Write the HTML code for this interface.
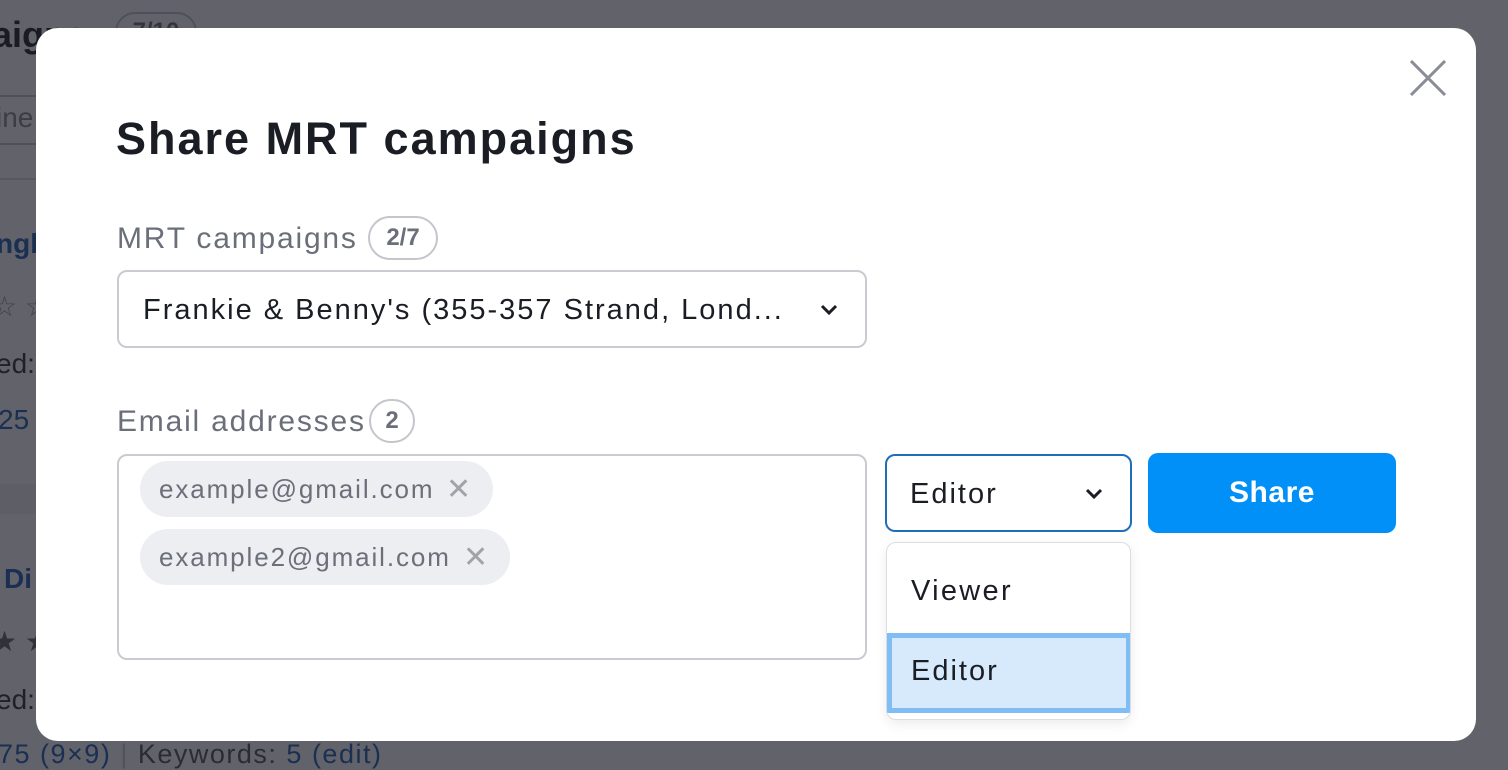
<!DOCTYPE html>
<html><head><meta charset="utf-8"><style>
*{box-sizing:border-box;margin:0;padding:0}
body{width:1508px;height:770px;overflow:hidden;position:relative;font-family:"Liberation Sans",sans-serif;background:#fff}
.bg{position:absolute;inset:0;background:#fff}
.bt{position:absolute;font-size:28px;white-space:nowrap}
.ov{position:absolute;inset:0;background:rgba(23,25,35,.68)}
.modal{position:absolute;left:36px;top:28px;width:1440px;height:713px;background:#fff;border-radius:22px}
.a{position:absolute;white-space:nowrap}
.lbl{font-size:30px;color:#6b6f7a;letter-spacing:1.8px}
.badge{position:absolute;border:2px solid #c4c6cc;border-radius:22px;height:44px;font-size:24px;color:#6b6f7a;display:flex;align-items:center;justify-content:center;font-weight:bold}
.chip{position:absolute;height:56px;border-radius:28px;background:#eceef1;font-size:26px;color:#6b6f7a;display:flex;align-items:center;padding-left:19px;letter-spacing:1.9px}
.x{position:absolute;top:11px;font-size:30px;color:#a0a3aa;letter-spacing:0}
</style></head><body>
<div class="bg">
<div class="bt" style="left:-8px;top:14px;font-weight:bold;font-size:36px;color:#222">aigns</div>
<div class="badge" style="left:115px;top:12px;width:82px;height:40px">7/10</div>
<div style="position:absolute;left:-10px;top:95px;width:60px;height:50px;border:2px solid #c4c6cc;border-radius:8px"></div>
<div class="bt" style="left:-4px;top:102px;color:#888">ine</div>
<div style="position:absolute;left:0;top:178px;width:40px;height:2px;background:#ddd"></div>
<div class="bt" style="left:-4px;top:228px;font-weight:bold;color:#1f5fb0">ngl</div>
<div class="bt" style="left:-8px;top:290px;color:#999">☆ ☆</div>
<div class="bt" style="left:-4px;top:348px;color:#333">ed:</div>
<div class="bt" style="left:-2px;top:404px;color:#1f5fb0">25</div>
<div style="position:absolute;left:0;top:484px;width:40px;height:30px;background:#eef0f3"></div>
<div class="bt" style="left:4px;top:563px;font-weight:bold;color:#1f5fb0">Di</div>
<div class="bt" style="left:-8px;top:625px;color:#666">★ ★</div>
<div class="bt" style="left:-4px;top:684px;color:#333">ed:</div>
<div class="bt" style="left:-2px;top:739px;font-size:27px;color:#1f5fb0;letter-spacing:1.5px">75 (9×9) <span style="color:#ccc">|</span> <span style="color:#555">Keywords:</span> 5 (edit)</div>
</div>
<div class="ov"></div>
<div class="modal">
<svg class="a" style="left:1374px;top:32px" width="36" height="36" viewBox="0 0 36 36"><path d="M1 1L35 35M35 1L1 35" stroke="#8a8d96" stroke-width="3" fill="none"/></svg>
<div class="a" style="left:80px;top:85px;font-size:45px;font-weight:bold;color:#1b1d24;letter-spacing:2px">Share MRT campaigns</div>
<div class="a lbl" style="left:81px;top:194px">MRT campaigns</div>
<div class="badge" style="left:332px;top:188px;width:70px">2/7</div>
<div class="a" style="left:81px;top:242px;width:750px;height:78px;border:2px solid #c9cbd0;border-radius:10px"></div>
<div class="a" style="left:107px;top:266px;font-size:29px;color:#1b1d24;letter-spacing:2px">Frankie &amp; Benny's (355-357 Strand, Lond...</div>
<svg class="a" style="left:784px;top:276px" width="18" height="12" viewBox="0 0 18 12"><path d="M2 2l7 7 7-7" stroke="#1b1d24" stroke-width="3" fill="none"/></svg>
<div class="a lbl" style="left:81px;top:377px">Email addresses</div>
<div class="badge" style="left:333px;top:371px;width:46px">2</div>
<div class="a" style="left:81px;top:426px;width:750px;height:206px;border:2px solid #c9cbd0;border-radius:10px"></div>
<div class="chip" style="left:104px;top:433px;width:353px">example@gmail.com<span class="x" style="left:306px">✕</span></div>
<div class="chip" style="left:104px;top:501px;width:370px">example2@gmail.com<span class="x" style="left:323px">✕</span></div>
<div class="a" style="left:849px;top:426px;width:247px;height:78px;border:2px solid #1f6fb8;border-radius:10px"></div>
<div class="a" style="left:874px;top:450px;font-size:29px;color:#1b1d24;letter-spacing:2px">Editor</div>
<svg class="a" style="left:1049px;top:460px" width="18" height="12" viewBox="0 0 18 12"><path d="M2 2l7 7 7-7" stroke="#1b1d24" stroke-width="3" fill="none"/></svg>
<div class="a" style="left:1112px;top:425px;width:248px;height:80px;background:#0090f7;border-radius:10px;color:#fff;font-size:30px;font-weight:bold;display:flex;align-items:center;justify-content:center;letter-spacing:0.5px">Share</div>
<div class="a" style="left:850px;top:514px;width:245px;height:178px;border:1px solid #dcdde1;border-radius:10px;background:#fff;box-shadow:0 4px 12px rgba(0,0,0,.08);overflow:hidden">
<div style="position:absolute;left:24px;top:32px;font-size:29px;color:#1b1d24;letter-spacing:2.3px">Viewer</div>
<div style="position:absolute;left:0;top:90px;width:244px;height:80px;background:#d6eafc;border:5px solid #80bdf5"></div>
<div style="position:absolute;left:24px;top:112px;font-size:29px;color:#1b1d24;letter-spacing:2px">Editor</div>
</div>
</div>
</body></html>
